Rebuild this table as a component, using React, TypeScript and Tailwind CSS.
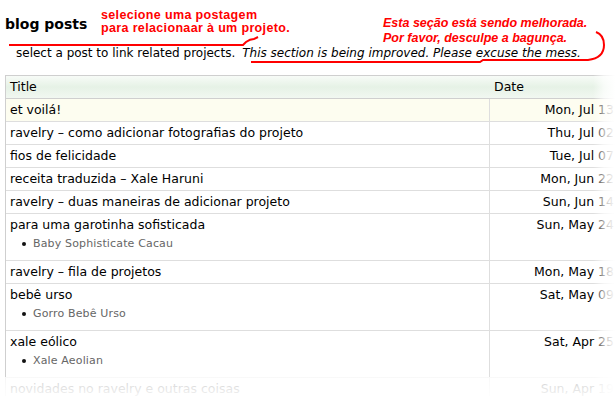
type Post = { title: string; date: string; projects?: string[]; highlight?: boolean };

const posts: Post[] = [
  { title: "et voilá!", date: "Mon, Jul 13", highlight: true },
  { title: "ravelry – como adicionar fotografias do projeto", date: "Thu, Jul 02" },
  { title: "fios de felicidade", date: "Tue, Jul 07" },
  { title: "receita traduzida – Xale Haruni", date: "Mon, Jun 22" },
  { title: "ravelry – duas maneiras de adicionar projeto", date: "Sun, Jun 14" },
  { title: "para uma garotinha sofisticada", date: "Sun, May 24", projects: ["Baby Sophisticate Cacau"] },
  { title: "ravelry – fila de projetos", date: "Mon, May 18" },
  { title: "bebê urso", date: "Sat, May 09", projects: ["Gorro Bebê Urso"] },
  { title: "xale eólico", date: "Sat, Apr 25", projects: ["Xale Aeolian"] },
  { title: "novidades no ravelry e outras coisas", date: "Sun, Apr 19" },
];

function PostRow({ post }: { post: Post }) {
  return (
    <div className={`flex border-b border-[#dedede] ${post.highlight ? "bg-[#fdfdf0]" : "bg-white"}`}>
      <div className="flex-1 pl-[4px]">
        <div className="leading-[22px] text-[12.5px] text-black whitespace-nowrap">{post.title}</div>
        {post.projects && (
          <ul className="pb-[8px]">
            {post.projects.map((p) => (
              <li key={p} className="flex items-center leading-[16px] text-[11px] tracking-[0.15px] text-[#666]">
                <span className="ml-[12px] mr-[7px] w-[4px] h-[4px] rounded-full bg-[#111]" />
                {p}
              </li>
            ))}
          </ul>
        )}
      </div>
      <div className="w-[131px] border-l border-[#dedede] pr-[6px] text-right leading-[22px] text-[12.5px] text-black whitespace-nowrap">
        {post.date}
      </div>
    </div>
  );
}

export default function App() {
  return (
    <div className="relative w-[615px] h-[396px] overflow-hidden bg-white font-['DejaVu_Sans',sans-serif]">
      <h2 className="pl-[5px] pt-[15px] text-[14px] leading-[18px] font-bold text-black">blog posts</h2>
      <p className="mt-[12px] pl-[16px] text-[12px] leading-[16px] text-black whitespace-nowrap">
        select a post to link related projects.
        <i className="ml-[7px]">This section is being improved. Please excuse the mess.</i>
      </p>

      <div className="mt-[14px] ml-[5px] w-[616px] border border-[#cfcfcf]">
        <div className="flex border-b border-[#cfcfcf] bg-gradient-to-b from-[#f7fbf7] via-[#e6f2e6] to-[#f1f7f1]">
          <div className="flex-1 pl-[4px] leading-[22px] text-[12.5px] text-black">Title</div>
          <div className="w-[131px] pl-[5px] leading-[22px] text-[12.5px] text-black">Date</div>
        </div>
        {posts.map((p) => (
          <PostRow key={p.title} post={p} />
        ))}
      </div>

      {/* hand-written annotations */}
      <div className="absolute left-[101px] top-[9px] font-['Liberation_Sans',sans-serif] font-bold text-[12.5px] leading-[13px] tracking-[0.35px] text-[#ff0000]">
        <div>selecione uma postagem</div>
        <div>para relacionaar à um projeto.</div>
      </div>
      <div className="absolute left-[383px] top-[16px] font-['Liberation_Sans',sans-serif] font-bold italic text-[12.5px] leading-[15px] text-[#ff0000]">
        <div>Esta seção está sendo melhorada.</div>
        <div>Por favor, desculpe a bagunça.</div>
      </div>
      <svg className="absolute left-0 top-0" width="615" height="75" viewBox="0 0 615 75" fill="none">
        <path d="M9 45 H243 L246 42 Q250 39 254 39 L258 37" stroke="#ff0000" strokeWidth="2" />
        <path d="M251 62 H480 L483 60 H588 Q604 58 604 45 Q604 35 596 32" stroke="#ff0000" strokeWidth="2" />
      </svg>

      {/* faded edges of the clipping */}
      <div className="absolute right-0 top-[70px] bottom-0 w-[22px] bg-gradient-to-r from-transparent via-white/70 to-white" />
      <div className="absolute left-0 right-0 bottom-0 h-[19px] bg-gradient-to-b from-white/80 to-white/95" />
    </div>
  );
}
